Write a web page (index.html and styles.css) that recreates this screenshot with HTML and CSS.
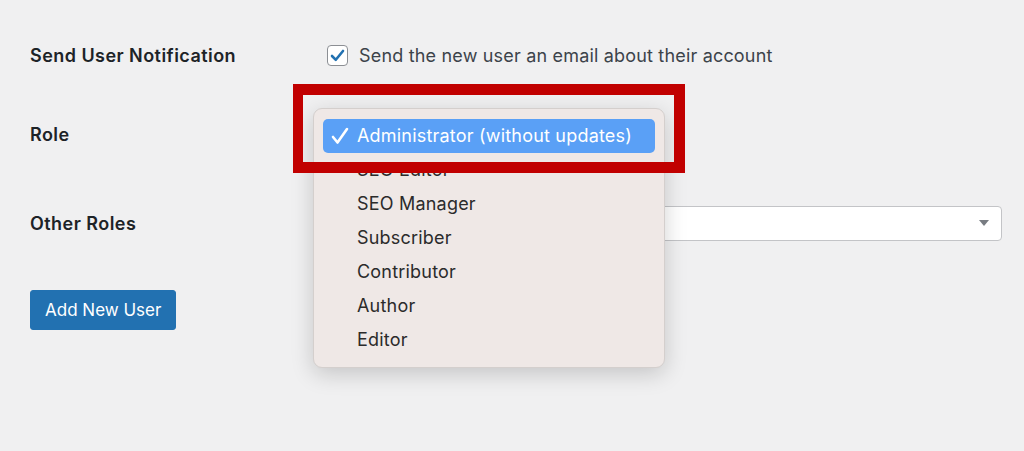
FILE: index.html
```html
<!DOCTYPE html>
<html>
<head>
<meta charset="utf-8">
<link rel="stylesheet" href="styles.css">
</head>
<body>
<div class="page">
  <div class="row row-notify">
    <div class="label">Send User Notification</div>
    <div class="field">
      <label class="check">
        <span class="box">
          <svg width="15" height="13" viewBox="0 0 15 13"><path d="M2 7 L5.8 10.8 L13 2" fill="none" stroke="#2271b1" stroke-width="2.6" stroke-linecap="round" stroke-linejoin="round"/></svg>
        </span>
        <span class="check-text">Send the new user an email about their account</span>
      </label>
    </div>
  </div>
  <div class="row row-role">
    <div class="label">Role</div>
    <div class="field"></div>
  </div>
  <div class="row row-other">
    <div class="label">Other Roles</div>
    <div class="field">
      <div class="select"><span class="arrow"></span></div>
    </div>
  </div>
  <button class="btn">Add New User</button>

  <div class="menu">
    <div class="item selected">
      <svg class="tick" width="18" height="18" viewBox="0 0 18 18"><path d="M2 10 L6.5 15.5 L16 2" fill="none" stroke="#fff" stroke-width="2.6" stroke-linecap="round" stroke-linejoin="round"/></svg>
      Administrator (without updates)
    </div>
    <div class="item">SEO Editor</div>
    <div class="item">SEO Manager</div>
    <div class="item">Subscriber</div>
    <div class="item">Contributor</div>
    <div class="item">Author</div>
    <div class="item">Editor</div>
  </div>
  <div class="redbox"></div>
</div>
</body>
</html>
```

FILE: styles.css
```css
html, body {
  margin: 0;
  padding: 0;
  background: #f0f0f1;
  height: 100%;
}
body {
  font-family: Inter, "Noto Sans", sans-serif;
  color: #1d2327;
  overflow: hidden;
}
.page {
  position: relative;
  padding: 33px 22px 0 30px;
}
.row {
  display: grid;
  grid-template-columns: 297px 1fr;
  align-items: center;
  height: 44px;
}
.row-role { margin-top: 35px; }
.row-other { margin-top: 45px; }
.label {
  font-size: 18px;
  font-weight: 600;
  letter-spacing: 0.45px;
  color: #1d2327;
}
.check {
  display: flex;
  align-items: center;
  gap: 11px;
}
.box {
  width: 19px;
  height: 19px;
  border: 1px solid #8c8f94;
  border-radius: 4px;
  background: #fff;
  display: flex;
  align-items: center;
  justify-content: center;
}
.check-text {
  font-size: 18px;
  letter-spacing: 0.18px;
  color: #3c434a;
}
.select {
  height: 33px;
  border: 1px solid #c3c4c7;
  border-radius: 4px;
  background: #fff;
  display: flex;
  align-items: center;
  justify-content: flex-end;
  padding-right: 12px;
}
.arrow {
  width: 0;
  height: 0;
  border-left: 5px solid transparent;
  border-right: 5px solid transparent;
  border-top: 6px solid #787c82;
}
.btn {
  margin-top: 45px;
  display: block;
  height: 40px;
  padding: 0 14px;
  background: #2271b1;
  border: 1px solid #2271b1;
  border-radius: 3px;
  color: #fff;
  font-family: Inter, "Noto Sans", sans-serif;
  font-size: 17px;
}
.menu {
  position: absolute;
  left: 313px;
  top: 108px;
  width: 332px;
  padding: 10px 9px;
  background: #efe8e6;
  border: 1px solid #d4cfcd;
  border-radius: 9px;
  box-shadow: 0 6px 22px rgba(0,0,0,0.18);
}
.item {
  height: 34px;
  box-sizing: border-box;
  padding-bottom: 2px;
  display: flex;
  align-items: center;
  padding-left: 34px;
  position: relative;
  font-size: 18px;
  letter-spacing: 0.2px;
  color: #2b2b2b;
  border-radius: 5px;
}
.item.selected {
  background: #5aa0f6;
  color: #fff;
}
.tick {
  position: absolute;
  left: 8px;
  top: 8px;
}
.redbox {
  position: absolute;
  left: 293px;
  top: 84px;
  width: 371px;
  height: 67px;
  border: 11px solid #c10000;
  border-left-width: 10px;
}
```
